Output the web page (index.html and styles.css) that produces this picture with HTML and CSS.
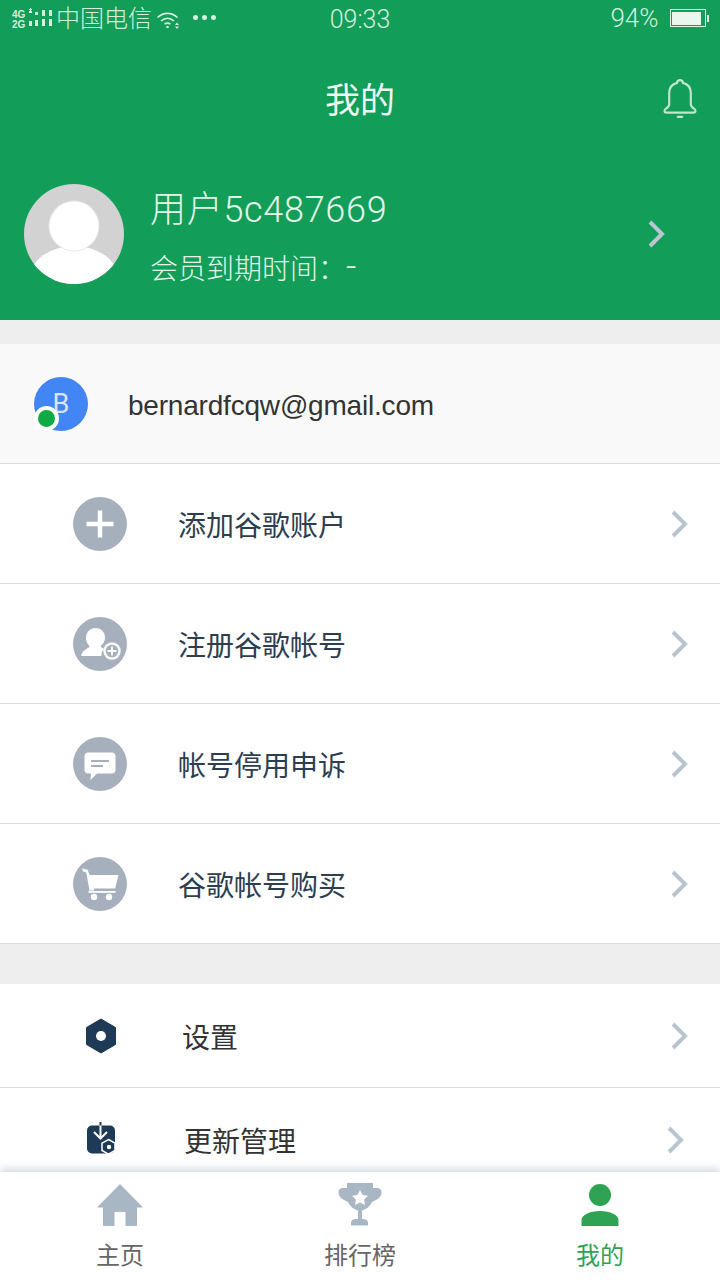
FILE: index.html
```html
<!DOCTYPE html>
<html lang="zh-CN">
<head>
<meta charset="utf-8">
<title>我的</title>
<link rel="stylesheet" href="styles.css">
</head>
<body>
<div class="screen">
  <div class="content">
    <header class="hero">
      <div class="status">
        <div class="status-left">
          <div class="net"><span>4G</span><span>2G</span></div>
          <svg class="signal" width="24" height="24" viewBox="0 0 24 24"><g fill="#d5f0de"><rect x="0" y="3" width="3" height="2"/><rect x="0" y="13" width="3" height="5"/><rect x="6" y="4" width="3" height="3"/><rect x="6" y="12" width="3" height="6"/><rect x="13" y="2" width="3" height="6"/><rect x="13" y="11" width="3" height="7"/><rect x="20" y="2" width="3" height="6"/><rect x="20" y="11" width="3" height="7"/></g><path d="M1.500 0v3M0 1.500h3" stroke="#d5f0de" stroke-width="1"/></svg>
          <span class="carrier">中国电信</span>
          <svg class="wifi" width="26" height="20" viewBox="0 0 26 20" fill="none" stroke="#d5f0de" stroke-width="1.600"><path d="M1.500 7.500C7.500 2 15.500 2 21.500 7.500"/><path d="M5 11C9 7.500 14 7.500 18 11"/><path d="M8.500 14.200C10.500 12.700 12.500 12.700 14.500 14.200"/><circle cx="11.500" cy="17" r="1.300" fill="#d5f0de" stroke="none"/><path d="M21 12.500l-2 2.500h4zM21 19l-2-2.500h4z" fill="#d5f0de" stroke="none"/></svg>
          <div class="dots"><i></i><i></i><i></i></div>
        </div>
        <div class="clock">09:33</div>
        <div class="status-right">
          <span>94%</span>
          <div class="battery"><div class="battery-fill"></div></div>
          <div class="battery-tip"></div>
        </div>
      </div>
      <div class="nav">
        <h1 class="nav-title">我的</h1>
        <svg class="bell" width="36" height="40" viewBox="0 0 36 40" fill="none" stroke="#bfe6cd" stroke-width="2" stroke-linejoin="round"><path d="M18 3.500c-1.600 0-2.600 1-2.700 2.500C10.500 7.200 8 11 8 15.500v10.200c0 1.700-1.200 3-3 4.100-1.700 1-2 3.700.5 3.700h25c2.500 0 2.200-2.700.5-3.700-1.800-1.100-3-2.400-3-4.100V15.500C28 11 25.500 7.200 20.700 6 20.600 4.500 19.600 3.500 18 3.500z"/><path d="M16 37.500h4" stroke-linecap="round"/></svg>
      </div>
      <div class="profile">
        <svg class="avatar" width="100" height="100" viewBox="0 0 100 100"><defs><clipPath id="avatar-clip"><circle cx="50" cy="50" r="50"/></clipPath></defs><g clip-path="url(#avatar-clip)"><rect width="100" height="100" fill="#d2d2d2"/><ellipse cx="50" cy="94" rx="44" ry="32" fill="#fff"/><circle cx="50" cy="42" r="25.500" fill="#e6e6e6"/><circle cx="50" cy="42" r="24.500" fill="#fff"/></g></svg>
        <div class="profile-text">
          <div class="profile-name">用户5c487669</div>
          <div class="profile-sub">会员到期时间：<span class="dash">-</span></div>
        </div>
        <svg class="chev chev-hero" width="20" height="30" viewBox="0 0 20 30" fill="none"><path d="M3 3l12 12L3 27" stroke="#b9c6d2" stroke-width="4"/></svg>
      </div>
    </header>

    <div class="gap-small"></div>

    <section class="account">
      <div class="account-avatar">B<span class="account-dot"></span></div>
      <div class="account-mail">bernardfcqw@gmail.com</div>
    </section>

    <section class="list">
      <div class="row">
        <span class="disc"><svg width="54" height="54" viewBox="0 0 54 54"><path d="M27 13.500v27M13.500 27h27" stroke="#fff" stroke-width="4.500"/></svg></span>
        <span class="row-label">添加谷歌账户</span>
        <svg class="chev" width="20" height="30" viewBox="0 0 20 30" fill="none"><path d="M3 3l12 12L3 27" stroke="#b9c6d2" stroke-width="4"/></svg>
      </div>
      <div class="row">
        <span class="disc"><svg width="54" height="54" viewBox="0 0 54 54"><path fill="#fff" d="M22.500 11c5.500 0 9.500 4 9.500 9.500 0 3.500-1.700 6.200-3.800 8-.6.700-.6 1.500.3 2l2.500 1.500c-1.600 1.500-2.500 3.500-2.500 6 0 .3 0 .7.100 1H9c-.6 0-1-.4-.8-1 1.200-3.700 4-5.700 7.500-7.500 1-.6 1-1.400.3-2.100-2.200-1.900-3-4.900-3-7.900 0-5.500 4.500-9.500 9.500-9.500z"/><circle cx="39" cy="34" r="8.700" fill="#fff"/><circle cx="39" cy="34" r="6.300" fill="#a5b0bc"/><path d="M39 29.500v9M34.500 34h9" stroke="#fff" stroke-width="1.800"/></svg></span>
        <span class="row-label">注册谷歌帐号</span>
        <svg class="chev" width="20" height="30" viewBox="0 0 20 30" fill="none"><path d="M3 3l12 12L3 27" stroke="#b9c6d2" stroke-width="4"/></svg>
      </div>
      <div class="row">
        <span class="disc"><svg width="54" height="54" viewBox="0 0 54 54"><path fill="#fff" d="M15 15.500h24c2 0 3.500 1.500 3.500 3.500v14c0 2-1.500 3.500-3.500 3.500H24l-6.500 6.500.5-6.500h-3c-2 0-3.500-1.500-3.500-3.500V19c0-2 1.500-3.500 3.500-3.500z"/><rect x="18" y="23" width="18" height="2" fill="#a5b0bc"/><rect x="18" y="28" width="12" height="2" fill="#a5b0bc"/></svg></span>
        <span class="row-label">帐号停用申诉</span>
        <svg class="chev" width="20" height="30" viewBox="0 0 20 30" fill="none"><path d="M3 3l12 12L3 27" stroke="#b9c6d2" stroke-width="4"/></svg>
      </div>
      <div class="row">
        <span class="disc"><svg width="54" height="54" viewBox="0 0 54 54"><path fill="#fff" d="M9 11.500l5.500 1.200 2.200 5.300h28.800l-3.300 13.500H20.500l.7 2H16.500L13.300 15.500 10 14.500z"/><rect x="15.500" y="34" width="27" height="1.800" fill="#fff"/><circle cx="21" cy="40" r="3.200" fill="#fff"/><circle cx="36" cy="40" r="3.200" fill="#fff"/></svg></span>
        <span class="row-label">谷歌帐号购买</span>
        <svg class="chev" width="20" height="30" viewBox="0 0 20 30" fill="none"><path d="M3 3l12 12L3 27" stroke="#b9c6d2" stroke-width="4"/></svg>
      </div>
    </section>

    <div class="gap-large"></div>

    <section class="list">
      <div class="row row-short">
        <svg class="row-icon" width="32" height="36" viewBox="0 0 32 36"><path fill="#1f3a56" d="M16 1l14.500 8.500v17L16 35 1.500 26.500v-17z" stroke="#1f3a56" stroke-linejoin="round"/><circle cx="16" cy="18" r="5" fill="#fff"/></svg>
        <span class="row-label label-short">设置</span>
        <svg class="chev" width="20" height="30" viewBox="0 0 20 30" fill="none"><path d="M3 3l12 12L3 27" stroke="#b9c6d2" stroke-width="4"/></svg>
      </div>
      <div class="row row-short">
        <svg class="row-icon" width="32" height="36" viewBox="0 0 32 36"><rect x="2" y="3.500" width="28" height="28" rx="5" fill="#1f3a56"/><path d="M15.500 0v16M9 10l6.500 6.500L22 10" fill="none" stroke="#fff" stroke-width="2"/><path d="M15.500 0v3.500" stroke="#1f3a56" stroke-width="2"/><path d="M23.500 17.500l6.500 3.700v7.300l-6.500 3.700-6.500-3.700v-7.300z" fill="#1f3a56" stroke="#fff" stroke-width="1.500"/><circle cx="24" cy="25" r="2.200" fill="#fff"/></svg>
        <span class="row-label label-update">更新管理</span>
        <svg class="chev chev-update" width="20" height="30" viewBox="0 0 20 30" fill="none"><path d="M3 3l12 12L3 27" stroke="#b9c6d2" stroke-width="4"/></svg>
      </div>
    </section>
  </div>

  <nav class="tabbar">
    <div class="tab">
      <svg width="48" height="44" viewBox="0 0 48 44"><path fill="#a9b6c4" d="M24 1L47 24.500H41V43H29.500V29h-11V43H7V24.500H1z"/></svg>
      <span>主页</span>
    </div>
    <div class="tab">
      <svg width="44" height="46" viewBox="0 0 44 46"><path fill="#a9b6c4" d="M9 1h26v5h4c3 0 4.500 2 4.500 4.500S41.500 16 39 17.500l-5 2.500c-2 4.500-5.500 7-10 8.500V37h1.500c2 0 4 .8 4.500 3.500v3H13v-3c.5-2.700 2.500-3.500 4.500-3.500H20v-8.500c-4.500-1.500-8-4-10-8.500l-5-2.500C2.500 16 .5 13 .5 10.500S2 6 5 6h4z"/><path fill="#fff" d="M22 8l2.500 5 5.500.8-4 3.800 1 5.400-5-2.600-5 2.600 1-5.400-4-3.800 5.500-.8z"/></svg>
      <span>排行榜</span>
    </div>
    <div class="tab tab-active">
      <svg width="40" height="44" viewBox="0 0 40 44"><circle cx="20" cy="12" r="11" fill="#2fa353"/><path fill="#2fa353" d="M1.500 43V37c0-5 8-9 18.500-9s18.500 4 18.500 9v6z"/></svg>
      <span>我的</span>
    </div>
  </nav>
</div>
</body>
</html>
```

FILE: styles.css
```css
* { box-sizing: border-box; }
html, body { margin: 0; padding: 0; }
body {
  width: 720px;
  height: 1280px;
  overflow: hidden;
  background: #fff;
  font-family: Roboto, "Noto Sans CJK SC", sans-serif;
}
.screen { width: 720px; height: 1280px; display: flex; flex-direction: column; overflow: hidden; }
.content { flex: 1; min-height: 0; overflow: hidden; background: #fff; }

.hero { height: 320px; background: #129d58; color: #e4f6ea; display: flex; flex-direction: column; }
.status { height: 40px; padding: 0 11px 0 12px; display: flex; align-items: center; position: relative; font-weight: 300; color: #d5f0de; }
.status-left { display: flex; align-items: center; flex: 1; }
.net { display: flex; flex-direction: column; font: 700 10px/10px "Liberation Sans", sans-serif; width: 17px; }
.signal { flex: none; }
.carrier { font-size: 24px; line-height: 36px; margin-left: 3px; margin-top: -2px; font-weight: 300; }
.wifi { margin-left: 4px; margin-right: -4px; }
.dots { display: flex; gap: 4px; margin-left: 15px; margin-top: -6px; }
.dots i { width: 5px; height: 5px; border-radius: 50%; background: #d5f0de; }
.clock { position: absolute; left: 0; right: 0; text-align: center; font-size: 25px; line-height: 40px; }
.status-right { display: flex; align-items: center; font-size: 26px; margin-top: -4px; }
.battery { width: 36px; height: 18px; border: 1.500px solid #e4f6ea; margin-left: 11px; padding: 1.500px; }
.battery-fill { width: 94%; height: 100%; background: #e9f7ee; }
.battery-tip { width: 2.500px; height: 7px; background: #d5f0de; margin-left: 1px; }

.nav { height: 120px; position: relative; display: flex; align-items: center; justify-content: center; }
.nav-title { margin: 4px 0 0; font-size: 35px; font-weight: 400; line-height: 40px; color: #edf9f1; }
.bell { position: absolute; right: 22px; top: 38px; transform: scale(1.080); }

.profile { flex: 1; display: flex; align-items: center; padding: 0 24px; position: relative; }
.avatar { flex: none; margin-bottom: 12px; }
.profile-text { margin-left: 26px; margin-bottom: 5px; flex: 1; }
.profile-name { font-size: 36px; line-height: 44px; font-weight: 300; letter-spacing: .7px; }
.profile-sub { font-size: 28px; line-height: 36px; margin-top: 20px; font-weight: 300; }
.dash { font-size: 36px; line-height: 0; }
.chev-hero { margin-right: 29px; margin-bottom: 12px; }

.gap-small { height: 24px; background: #eeeeee; }
.gap-large { height: 40px; background: #eeeeee; }

.account { height: 120px; background: #f9f9f9; border-bottom: 1px solid #d9d9d9; display: flex; align-items: center; padding-left: 34px; }
.account-avatar { width: 54px; height: 54px; border-radius: 50%; background: #4285f4; color: #d8e6fd; position: relative; font-size: 27px; font-weight: 400; line-height: 54px; text-align: center; }
.account-dot { position: absolute; left: 0; bottom: 0; width: 25px; height: 25px; border-radius: 50%; background: #0eab45; border: 4px solid #fff; }
.account-mail { margin-left: 40px; margin-top: 4px; font-family: "Liberation Sans", "Noto Sans CJK SC", sans-serif; font-size: 28px; letter-spacing: -.2px; color: #333; }

.row { height: 120px; display: flex; align-items: center; border-bottom: 1px solid #dcdcdc; padding-left: 73px; padding-right: 30px; }
.row-short { height: 104px; padding-left: 85px; }
.disc { width: 54px; height: 54px; border-radius: 50%; background: #a5b0bc; display: block; flex: none; }
.disc svg { display: block; }
.row-label { margin-left: 51px; font-size: 28px; color: #2c3e50; flex: 1; font-weight: 400; }
.row-icon { flex: none; width: 32px; }
.label-short { margin-left: 65px; color: #333; }
.label-update { margin-left: 67px; color: #333; }
.chev { flex: none; }
.chev-update { margin-right: 4px; }

.tabbar { height: 108px; flex: none; background: #fff; display: grid; grid-template-columns: repeat(3, 1fr); position: relative; box-shadow: 0 -3px 8px rgba(120,145,170,.35); }
.tab { display: flex; flex-direction: column; align-items: center; padding-top: 10px; color: #666; font-size: 24px; line-height: 30px; }
.tab svg { display: block; height: 46px; }
.tab span { margin-top: 13px; }
.tab-active { color: #2fa353; }
```
